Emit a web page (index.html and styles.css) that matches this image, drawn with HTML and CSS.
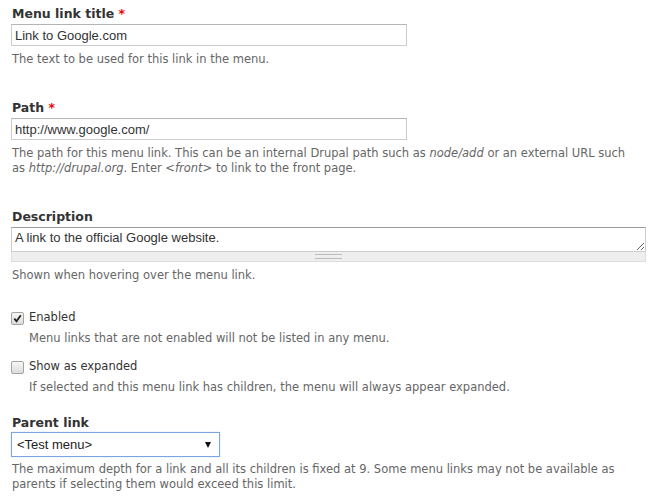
FILE: index.html
```html
<!DOCTYPE html>
<html>
<head>
<meta charset="utf-8">
<link rel="stylesheet" href="styles.css">
</head>
<body>
<form class="form">
  <div class="item item-title">
    <label class="label">Menu link title <span class="req">*</span></label>
    <input class="text" type="text" value="Link to Google.com">
    <div class="desc">The text to be used for this link in the menu.</div>
  </div>
  <div class="item item-path">
    <label class="label">Path <span class="req">*</span></label>
    <input class="text" type="text" value="http://www.google.com/">
    <div class="desc"><span>The path for this menu link. This can be an internal Drupal path such as </span><em>node/add</em><span> or an external URL such</span> <span>as </span><em>http://drupal.org</em><span>. Enter </span><em>&lt;front&gt;</em><span> to link to the front page.</span></div>
  </div>
  <div class="item item-desc">
    <label class="label">Description</label>
    <div class="ta-wrap">
      <textarea class="ta" rows="1">A link to the official Google website.</textarea>
      <div class="grippie"><span class="grip"></span></div>
    </div>
    <div class="desc">Shown when hovering over the menu link.</div>
  </div>
  <div class="item check check-enabled">
    <label class="check-row"><span class="cb"><svg width="9" height="9" viewBox="0 0 9 9"><path d="M1.3 4.6 L3.5 7.2 L7.8 1.2" fill="none" stroke="#222" stroke-width="1.8"/></svg></span>Enabled</label>
    <div class="desc indent">Menu links that are not enabled will not be listed in any menu.</div>
  </div>
  <div class="item check check-expanded">
    <label class="check-row"><span class="cb"></span>Show as expanded</label>
    <div class="desc indent">If selected and this menu link has children, the menu will always appear expanded.</div>
  </div>
  <div class="item item-parent">
    <label class="label">Parent link</label>
    <div class="select"><span>&lt;Test menu&gt;</span><span class="arrow"></span></div>
    <div class="desc">The maximum depth for a link and all its children is fixed at 9. Some menu links may not be available as parents if selecting them would exceed this limit.</div>
  </div>
</form>
</body>
</html>
```
FILE: styles.css
```css
html, body {
  margin: 0;
  padding: 0;
  background: #fff;
}
body {
  font-family: "DejaVu Sans", sans-serif;
  color: #333;
  font-size: 11.5px;
}
.form {
  width: 635px;
  padding: 6px 4px 0 11px;
  display: flex;
  flex-direction: column;
}
.label {
  display: block;
  font-family: "DejaVu Sans", sans-serif;
  font-weight: bold;
  font-size: 12.5px;
  color: #333;
  line-height: 16px;
  padding-left: 1px;
  margin-bottom: 2px;
}
.req { color: #e00; }
.text {
  display: block;
  box-sizing: border-box;
  width: 396px;
  height: 22px;
  margin: 0;
  border: 1px solid #ccc;
  border-top-color: #b4b4b4;
  padding: 0 3px;
  font-family: "Liberation Sans", Arial, sans-serif;
  font-size: 13px;
  color: #333;
  outline: none;
}
.desc {
  max-width: 626px;
  font-size: 11.5px;
  color: #666;
  line-height: 15px;
  margin-top: 6px;
  padding-left: 1px;
}
.desc em { font-style: italic; }
.item-title { margin-bottom: 33px; }
.item-path { margin-bottom: 33px; }
.item-desc { margin-bottom: 26px; }
.ta-wrap { display: flex; flex-direction: column; width: 635px; }
.ta {
  display: block;
  box-sizing: border-box;
  width: 635px;
  height: 24px;
  margin: 0;
  border: 1px solid #ccc;
  border-top-color: #999;
  border-bottom: none;
  padding: 2px 3px 0;
  font-family: "Liberation Sans", Arial, sans-serif;
  font-size: 13px;
  line-height: 15px;
  color: #333;
  resize: vertical;
  outline: none;
  overflow: hidden;
}
.grippie {
  box-sizing: border-box;
  height: 11px;
  background: #eee;
  border: 1px solid #ddd;
  border-top-color: #ccc;
  display: flex;
  justify-content: center;
  align-items: center;
}
.grip {
  width: 27px;
  height: 3px;
  border-top: 1px solid #bbb;
  border-bottom: 1px solid #bbb;
}
.check-row {
  display: flex;
  align-items: flex-start;
  gap: 5px;
  font-size: 11.5px;
  color: #333;
  line-height: 16px;
}
.cb {
  box-sizing: border-box;
  width: 13px;
  height: 13px;
  margin-top: 3px;
  border: 1px solid #a3a3a3;
  border-radius: 2px;
  background: linear-gradient(#f7f7f7, #dcdcdc);
  display: flex;
  align-items: center;
  justify-content: center;
}
.indent { padding-left: 18px; }
.check-enabled { margin-bottom: 12px; }
.check-expanded { margin-bottom: 20px; }
.select {
  box-sizing: border-box;
  width: 209px;
  height: 25px;
  border: 1px solid #7ba5e2;
  box-shadow: 0 0 1px #a9c6ef;
  display: flex;
  align-items: center;
  justify-content: space-between;
  padding: 0 8px 0 5px;
  font-family: "Liberation Sans", Arial, sans-serif;
  font-size: 13px;
  color: #222;
  margin-top: -1px;
}
.arrow {
  width: 0;
  height: 0;
  border-left: 3px solid transparent;
  border-right: 3px solid transparent;
  border-top: 6px solid #111;
}
.item-parent .desc { margin-top: 5px; }
```
